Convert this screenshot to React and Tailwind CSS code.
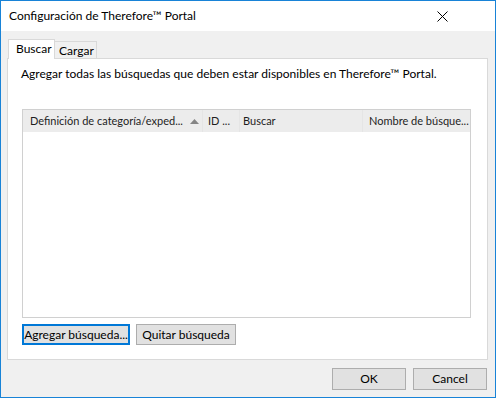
const font = "font-['Segoe_UI','Lato','Noto_Sans',sans-serif]";

const TabButton = ({ label, active }) =>
  active ? (
    <div className="relative z-10 -mb-px ml-px flex h-[20px] w-[47px] items-start border border-b-0 border-[#d9d9d9] bg-white pl-[7px] pt-[1px] text-[12px] leading-[16px] text-black">
      {label}
    </div>
  ) : (
    <div className="flex h-[17px] w-[42px] items-start border border-l-0 border-b-0 border-[#d9d9d9] bg-[#f0f0f0] pl-[4px] pt-[1px] text-[12px] leading-[15px] text-black">
      {label}
    </div>
  );

const Column = ({ children, className }) => (
  <div className={`flex h-full shrink-0 items-center overflow-hidden whitespace-nowrap border-r border-[#e5e5e5] text-[11px] leading-[16px] text-[#1e1e1e] ${className}`}>
    {children}
  </div>
);

const DlgButton = ({ children, primary, className }) => (
  <button
    className={`flex items-center justify-center bg-[#e1e1e1] text-[12px] leading-[16px] text-black ${
      primary ? "border-2 border-[#0078d7]" : "border border-[#adadad]"
    } ${className}`}
  >
    {children}
  </button>
);

export default function App() {
  return (
    <div className={`flex h-[398px] w-[496px] flex-col border border-[#1883d7] bg-[#f0f0f0] ${font}`}>
      {/* Title bar */}
      <div className="flex h-[30px] shrink-0 items-center justify-between bg-white pl-[8px] pr-[47px]">
        <span className="text-[12px] leading-[16px] text-black">Configuración de Therefore™ Portal</span>
        <svg width="11" height="11" viewBox="0 0 11 11" className="mt-[1px]">
          <path d="M0.5 0.5 L10.5 10.5 M10.5 0.5 L0.5 10.5" stroke="#000" strokeWidth="1" fill="none" />
        </svg>
      </div>

      {/* Body */}
      <div className="flex flex-1 flex-col pl-[6px] pr-[7px] pt-[8px]">
        <div className="flex h-[19px] items-end">
          <TabButton label="Buscar" active />
          <TabButton label="Cargar" />
        </div>

        <div className="flex h-[302px] flex-col border border-[#d9d9d9] bg-white pl-[14px] pt-[7px]">
          <p className="-ml-px text-[12px] leading-[16px] text-black">
            Agregar todas las búsquedas que deben estar disponibles en Therefore™ Portal.
          </p>

          <div className="mt-[27px] flex h-[209px] w-[449px] flex-col border border-[#d0d0d0] bg-white">
            <div className="flex h-[22px] shrink-0 bg-[#ececec]">
              <Column className="w-[180px] pl-[7px]">
                <span>Definición de categoría/exped...</span>
                <svg width="9" height="5" viewBox="0 0 9 5" className="ml-[7px] shrink-0">
                  <path d="M0 5 L4.5 0 L9 5 Z" fill="#858585" />
                </svg>
              </Column>
              <Column className="w-[37px] pl-[5px]">ID ...</Column>
              <Column className="w-[123px] pl-[3px]">Buscar</Column>
              <Column className="w-[107px] border-r-0 pl-[6px]">Nombre de búsque...</Column>
            </div>
          </div>

          <div className="mt-[6px] flex gap-[6px]">
            <DlgButton primary className="h-[21px] w-[108px]">Agregar búsqueda...</DlgButton>
            <DlgButton className="h-[21px] w-[100px]">Quitar búsqueda</DlgButton>
          </div>
        </div>

        <div className="mt-[8px] flex justify-end gap-[7px] pr-px">
          <DlgButton className="h-[22px] w-[74px]">OK</DlgButton>
          <DlgButton className="h-[22px] w-[74px]">Cancel</DlgButton>
        </div>
      </div>
    </div>
  );
}
